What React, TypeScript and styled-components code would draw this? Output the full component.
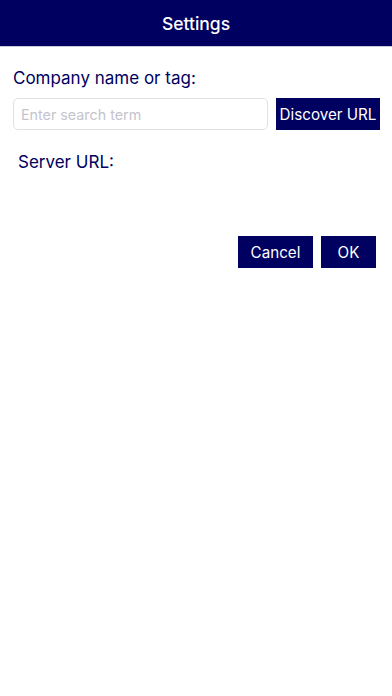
import styled, { createGlobalStyle } from 'styled-components';

const GlobalStyle = createGlobalStyle`
  html, body {
    margin: 0;
    padding: 0;
    background: #ffffff;
    font-family: Inter, "Noto Sans", Roboto, sans-serif;
  }
`;

const Page = styled.div`
  width: 392px;
  min-height: 696px;
  background: #ffffff;
`;

const Header = styled.header`
  height: 46px;
  background-color: #000060;
  border-bottom: 1px solid #c8c8dc;
  display: flex;
  align-items: center;
  justify-content: center;
  color: #ffffff;
  font-size: 17.5px;
  font-weight: 500;
`;

const Body = styled.section`
  padding: 21px 12px 0 13px;
`;

const Label = styled.div<{ $indent?: number }>`
  color: #000060;
  font-size: 17px;
  line-height: 21px;
  padding-left: ${(p) => p.$indent ?? 0}px;
`;

const SearchRow = styled.div`
  display: flex;
  align-items: center;
  gap: 8px;
  margin-top: 9px;
`;

const SearchInput = styled.input`
  width: 255px;
  height: 32px;
  box-sizing: border-box;
  border: 1px solid #e0e0e6;
  border-radius: 5px;
  padding: 0 7px;
  font-family: inherit;
  font-size: 14.3px;
  color: #333;
  outline: none;

  &::placeholder {
    color: #c4c4cc;
  }
`;

const NavyButton = styled.button<{ $width: number }>`
  width: ${(p) => p.$width}px;
  height: 32px;
  box-sizing: border-box;
  border: none;
  background-color: #000060;
  color: #ffffff;
  font-family: inherit;
  font-size: 15.2px;
  padding: 0;
  cursor: pointer;
`;

const ServerBlock = styled.div`
  margin-top: 22px;
`;

const Actions = styled.div`
  display: flex;
  justify-content: flex-end;
  gap: 8px;
  margin-top: 63px;
  padding-right: 4px;
`;

export default function App() {
  return (
    <Page>
      <GlobalStyle />
      <Header>Settings</Header>
      <Body>
        <Label>Company name or tag:</Label>
        <SearchRow>
          <SearchInput placeholder="Enter search term" />
          <NavyButton $width={104}>Discover URL</NavyButton>
        </SearchRow>
        <ServerBlock>
          <Label $indent={5}>Server URL:</Label>
        </ServerBlock>
        <Actions>
          <NavyButton $width={75}>Cancel</NavyButton>
          <NavyButton $width={55}>OK</NavyButton>
        </Actions>
      </Body>
    </Page>
  );
}
